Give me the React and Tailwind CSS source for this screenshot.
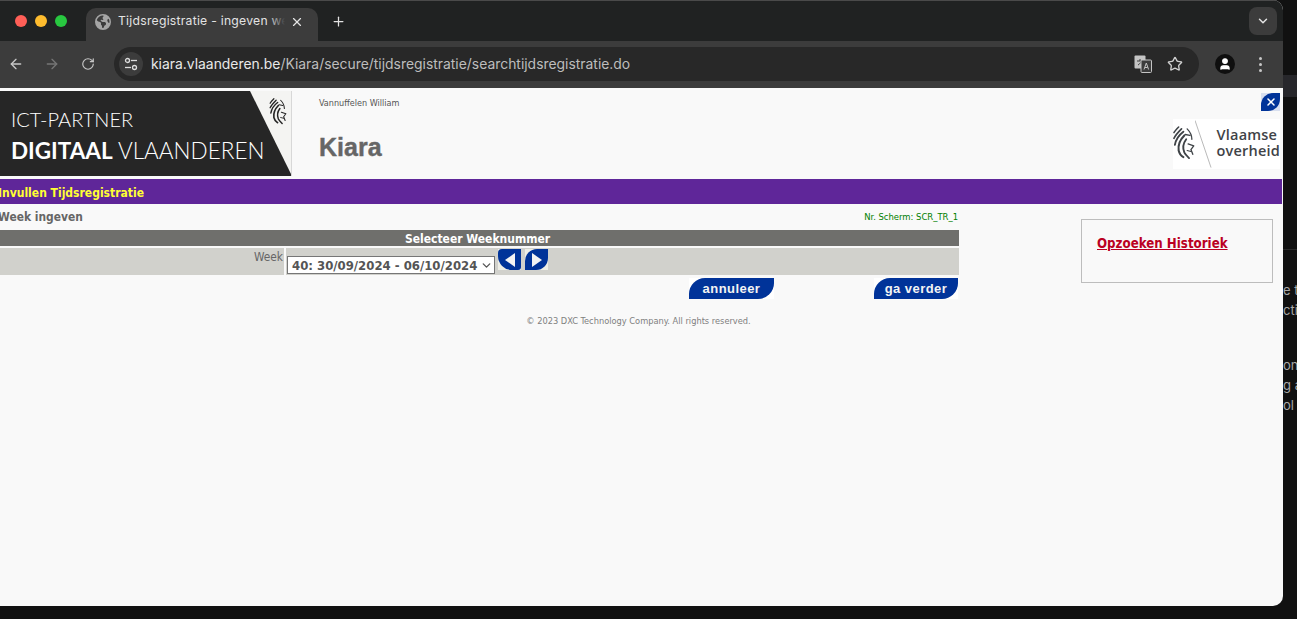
import { ArrowLeft, ArrowRight, RotateCw, Plus, X, ChevronDown, Star, User } from 'lucide-react';
import { FaEarthAmericas } from 'react-icons/fa6';

const Lion = ({ className }) => (
    <svg viewBox="0 0 23 36" className={className} fill="none" stroke="currentColor" strokeLinecap="round" strokeLinejoin="round">
        <path d="M6 1 C4 3 2 5 1 7" strokeWidth="1.6" />
        <path d="M9 3 C6 6 3 9 1 13" strokeWidth="1.8" />
        <path d="M11 6 C7 9 3 14 2 20" strokeWidth="2" />
        <path d="M12 10 C8 14 5 19 6 26 C7 30 9 32 11 33" strokeWidth="2.2" />
        <path d="M14 14 C11 18 10 23 12 28 C13 30 15 32 17 34" strokeWidth="2" />
        <path d="M15 3 C18 6 20 9 20 14" strokeWidth="1.4" />
        <path d="M13 9 L18 10" strokeWidth="1.4" />
        <path d="M16 19 L22 21 L19 25 L21 30" strokeWidth="1.4" />
        <path d="M15 26 L19 27" strokeWidth="1.2" />
    </svg>
);

const Arrow = ({ dir }) => (
    <button className="w-[23px] h-[21px] bg-[#eeeee6] block">
        <span className={`flex items-center justify-center w-full h-full bg-[#003399] ${dir === 'left' ? 'rounded-tl-[4px] rounded-bl-[14px] rounded-br-[3px]' : 'rounded-tl-[12px] rounded-br-[12px]'}`}>
            <svg viewBox="0 0 12 14" className="w-[12px] h-[14px]" fill="#f3f3f3">
                <path d={dir === 'left' ? 'M11 0 L1 7 L11 14 Z' : 'M1 0 L11 7 L1 14 Z'} />
            </svg>
        </span>
    </button>
);

const LeafButton = ({ children, width }) => (
    <button className={`${width} h-[21px] bg-white block`}>
        <span className="flex items-center justify-center w-full h-full bg-[#003399] rounded-tl-[16px] rounded-br-[16px] text-[#f3f3f3] text-[13px] font-bold tracking-[0.45px] font-['Liberation_Sans',sans-serif]">
            {children}
        </span>
    </button>
);

function ChromeBar() {
    return (
        <>
            {/* Tab strip */}
            <div className="h-[41px] bg-[#202222] flex items-end border-t border-[#4a4a4a] shrink-0">
                <div className="flex items-center gap-[8px] pl-[15px] w-[86px] h-full shrink-0">
                    <span className="w-3 h-3 rounded-full bg-[#ff5f57]" />
                    <span className="w-3 h-3 rounded-full bg-[#febc2e]" />
                    <span className="w-3 h-3 rounded-full bg-[#28c840]" />
                </div>
                <div className="w-[232px] h-[33px] bg-[#3c3c3c] rounded-t-[10px] flex items-center pl-[9px] pr-[10px] pb-[6px] text-[#e3e3e3] text-[12.2px] tracking-[0.25px] font-['Inter',sans-serif]">
                    <FaEarthAmericas className="w-4 h-4 text-[#a5a5a5] shrink-0" />
                    <span className="relative ml-[7px] w-[167px] overflow-hidden whitespace-nowrap">
                        Tijdsregistratie - ingeven week
                        <span className="absolute right-0 top-0 bottom-0 w-[16px] bg-gradient-to-r from-transparent to-[#3c3c3c]" />
                    </span>
                    <X className="w-[14px] h-[14px] ml-[5px] shrink-0" strokeWidth={2} />
                </div>
                <div className="w-[40px] h-[33px] pb-[6px] flex items-center justify-center">
                    <Plus className="w-[15px] h-[15px] text-[#e3e3e3]" strokeWidth={2} />
                </div>
                <div className="ml-auto mr-[6px] mb-[6px] w-[28px] h-[28px] rounded-lg bg-[#3c3c3c] flex items-center justify-center">
                    <ChevronDown className="w-[14px] h-[14px] text-[#e3e3e3]" strokeWidth={2.5} />
                </div>
            </div>
            {/* Toolbar */}
            <div className="h-[47px] bg-[#3c3c3c] flex items-center pb-[1px] shrink-0">
                <ArrowLeft className="w-[16px] h-[16px] ml-[8px] text-[#c7c7c7]" />
                <ArrowRight className="w-[16px] h-[16px] ml-[20px] text-[#767676]" />
                <RotateCw className="w-[14px] h-[14px] ml-[21px] text-[#c7c7c7]" />
                <div className="ml-[19px] w-[1085px] h-[34px] rounded-full bg-[#282828] flex items-center pl-[5px] font-['Inter',sans-serif] text-[13.9px]">
                    <span className="w-6 h-6 rounded-full bg-[#3c3c3c] flex items-center justify-center">
                        <svg viewBox="0 0 14 14" className="w-[14px] h-[14px]" fill="none" stroke="#dcdcdc" strokeWidth="1.3">
                            <circle cx="3.5" cy="3.5" r="2" />
                            <path d="M7 3.5 H13" />
                            <path d="M1 10.5 H7" />
                            <circle cx="10.5" cy="10.5" r="2" />
                        </svg>
                    </span>
                    <span className="ml-[8px] text-[#e8e8e8]">kiara.vlaanderen.be</span>
                    <span className="text-[#bdbdbd]">/Kiara/secure/tijdsregistratie/searchtijdsregistratie.do</span>
                    <span className="ml-auto mr-[16px] flex items-center gap-[15px]">
                        <svg viewBox="0 0 18 18" className="w-[18px] h-[18px]">
                            <rect x="0.5" y="0.5" width="11" height="13" rx="1" fill="#c4c4c4" />
                            <path d="M3 6 H9 M6 4 V6 M4 10 C6 9 7 7 8 6" stroke="#3c3c3c" strokeWidth="1" fill="none" />
                            <rect x="7" y="5" width="10.5" height="12.5" rx="1" fill="#3c3c3c" stroke="#c4c4c4" />
                            <path d="M10 14.5 L12.3 8 L14.6 14.5 M11 12.5 H13.6" stroke="#c4c4c4" strokeWidth="1" fill="none" />
                        </svg>
                        <Star className="w-[16px] h-[16px] text-[#d0d0d0]" />
                    </span>
                </div>
                <span className="ml-[16px] w-5 h-5 rounded-full bg-[#0f0f0f] flex items-center justify-center">
                    <User className="w-[14px] h-[14px] text-white" fill="white" />
                </span>
                <span className="ml-[24px] flex flex-col gap-[3px]">
                    <span className="w-[3px] h-[3px] rounded-full bg-[#c7c7c7]" />
                    <span className="w-[3px] h-[3px] rounded-full bg-[#c7c7c7]" />
                    <span className="w-[3px] h-[3px] rounded-full bg-[#c7c7c7]" />
                </span>
            </div>
        </>
    );
}

function PageHeader() {
    return (
        <div className="h-[91px] flex shrink-0 relative">
            {/* ICT-partner banner */}
            <div className="mt-[3px] w-[292px] h-[85px] relative bg-[#f4f4f2] border-r border-[#d8d8d8] font-['Lato',sans-serif] text-white shrink-0 overflow-hidden">
                <svg viewBox="0 0 292 85" className="absolute inset-0 w-[292px] h-[85px]">
                    <polygon points="0,0 250,0 292,85 0,85" fill="#262626" />
                </svg>
                <Lion className="absolute left-[269px] top-[7px] w-[18px] h-[27px] text-[#262626]" />
                <div className="relative pl-[11px] pt-[15px] text-[20px] leading-[26px] font-light">ICT-PARTNER</div>
                <div className="relative pl-[11px] pt-[4px] text-[22.5px] leading-[30px] whitespace-nowrap font-light"><span className="font-bold">DIGITAAL</span> VLAANDEREN</div>
            </div>
            <div className="pl-[27px] pt-[10px] font-['DejaVu_Sans_Condensed','DejaVu_Sans',sans-serif]">
                <div className="text-[9px] leading-[10px] text-[#555555]">Vannuffelen William</div>
                <div className="mt-[23px] text-[25px] leading-[32px] font-bold text-[#666666] [-webkit-text-stroke:0.4px_#666666] font-['Liberation_Sans',sans-serif]">Kiara</div>
            </div>
            {/* Close leaf + Vlaamse overheid logo */}
            <div className="ml-auto pr-[3px] flex flex-col items-end">
                <div className="mt-[5px] w-[19px] h-[18px] bg-[#d8dfef]">
                    <span className="flex items-center justify-center w-full h-full bg-[#003399] rounded-tl-[12px] rounded-br-[12px]">
                        <X className="w-[12px] h-[12px] text-white" strokeWidth={3} />
                    </span>
                </div>
                <div className="mt-[8px] w-[107px] h-[50px] bg-white flex">
                    <Lion className="mt-[6px] w-[23px] h-[36px] text-[#3f4347]" />
                    <svg viewBox="0 0 20 50" className="w-[20px] h-[50px]">
                        <path d="M0 0 L17 50" stroke="#b5b5b5" strokeWidth="1" />
                    </svg>
                    <div className="pl-[3px] pt-[8px] text-[14.5px] leading-[16px] font-semibold text-[#3f4347] font-['Open_Sans',sans-serif] tracking-[0.2px]">
                        <div>Vlaamse</div>
                        <div className="whitespace-nowrap">overheid</div>
                    </div>
                </div>
            </div>
        </div>
    );
}

export default function App() {
    return (
        <div className="w-[1297px] h-[619px] bg-[#111111] relative overflow-hidden">
            {/* Desktop window behind the browser */}
            <div className="absolute left-[1283px] top-[75px] w-[14px] h-[22px] bg-[#27272b]" />
            <div className="absolute left-[1283px] top-[249px] w-[14px] h-px bg-[#2a2a2a]" />
            <div className="absolute left-[1283px] top-[280px] text-[13px] leading-[20px] text-[#a8a8a8] font-['Inter',sans-serif] whitespace-nowrap w-[14px] overflow-hidden">
                <div>e t</div>
                <div>cti</div>
                <div className="mt-[35px]">ons</div>
                <div>g a</div>
                <div>ol</div>
            </div>

            {/* Browser window */}
            <div className="absolute left-0 top-0 w-[1283px] h-[606px] rounded-tr-[10px] rounded-br-[10px] overflow-hidden flex flex-col bg-[#f9f9f9]">
                <ChromeBar />
                <PageHeader />

                <div className="h-[25px] mr-[1px] pt-[3px] bg-[#5f2699] flex items-center text-[#ffff33] text-[12px] font-bold font-['DejaVu_Sans_Condensed','DejaVu_Sans',sans-serif] shrink-0 whitespace-nowrap">
                    <span className="-ml-[2px]">Invullen Tijdsregistratie</span>
                </div>

                <div className="flex flex-1 font-['DejaVu_Sans_Condensed','DejaVu_Sans',sans-serif]">
                    <div className="w-[959px] shrink-0">
                        <div className="h-[26px] flex items-center justify-between pt-[1px]">
                            <span className="text-[#666666] text-[11.9px] font-bold -ml-[2px]">Week ingeven</span>
                            <span className="text-[#008000] text-[9.4px] mr-[1px]">Nr. Scherm: SCR_TR_1</span>
                        </div>
                        <div className="h-[16px] bg-[#6f6f6c] text-white text-[12px] font-bold text-center leading-[18px] pr-[4px]">Selecteer Weeknummer</div>
                        <div className="mt-[2px] h-[27px] flex bg-[#d1d1cc]">
                            <div className="w-[284px] text-right text-[#666666] text-[11.8px] leading-[18px] pr-[1px]">Week</div>
                            <div className="w-[2px] bg-[#f9f9f9]" />
                            <div className="flex pl-[1px] pt-[1px] gap-[3px]">
                                <div className="relative mt-[7px] h-[18px] w-[208px] border border-[#767676] bg-white text-[#555555] text-[13px] font-bold leading-[17px] pl-[4px] whitespace-nowrap">
                                    40: 30/09/2024 - 06/10/2024
                                    <ChevronDown className="absolute right-[1px] top-[2px] w-[13px] h-[13px] text-[#555555]" strokeWidth={2.5} />
                                </div>
                                <Arrow dir="left" />
                                <span className="ml-[1px]"><Arrow dir="right" /></span>
                            </div>
                        </div>
                        <div className="mt-[3px] flex justify-end pr-[1px] gap-[100px]">
                            <LeafButton width="w-[85px]">annuleer</LeafButton>
                            <LeafButton width="w-[84px]">ga verder</LeafButton>
                        </div>
                        <div className="mt-[15px] pl-[318px] text-center text-[9.2px] text-[#808080]">© 2023 DXC Technology Company. All rights reserved.</div>
                    </div>
                    <aside className="ml-[122px] mt-[15px] w-[192px] h-[64px] border border-[#bdbdbd] pl-[15px] pt-[15px]">
                        <a className="text-[13.2px] font-bold underline text-[#bb0022] leading-[18px] block">Opzoeken Historiek</a>
                    </aside>
                </div>
            </div>
        </div>
    );
}
